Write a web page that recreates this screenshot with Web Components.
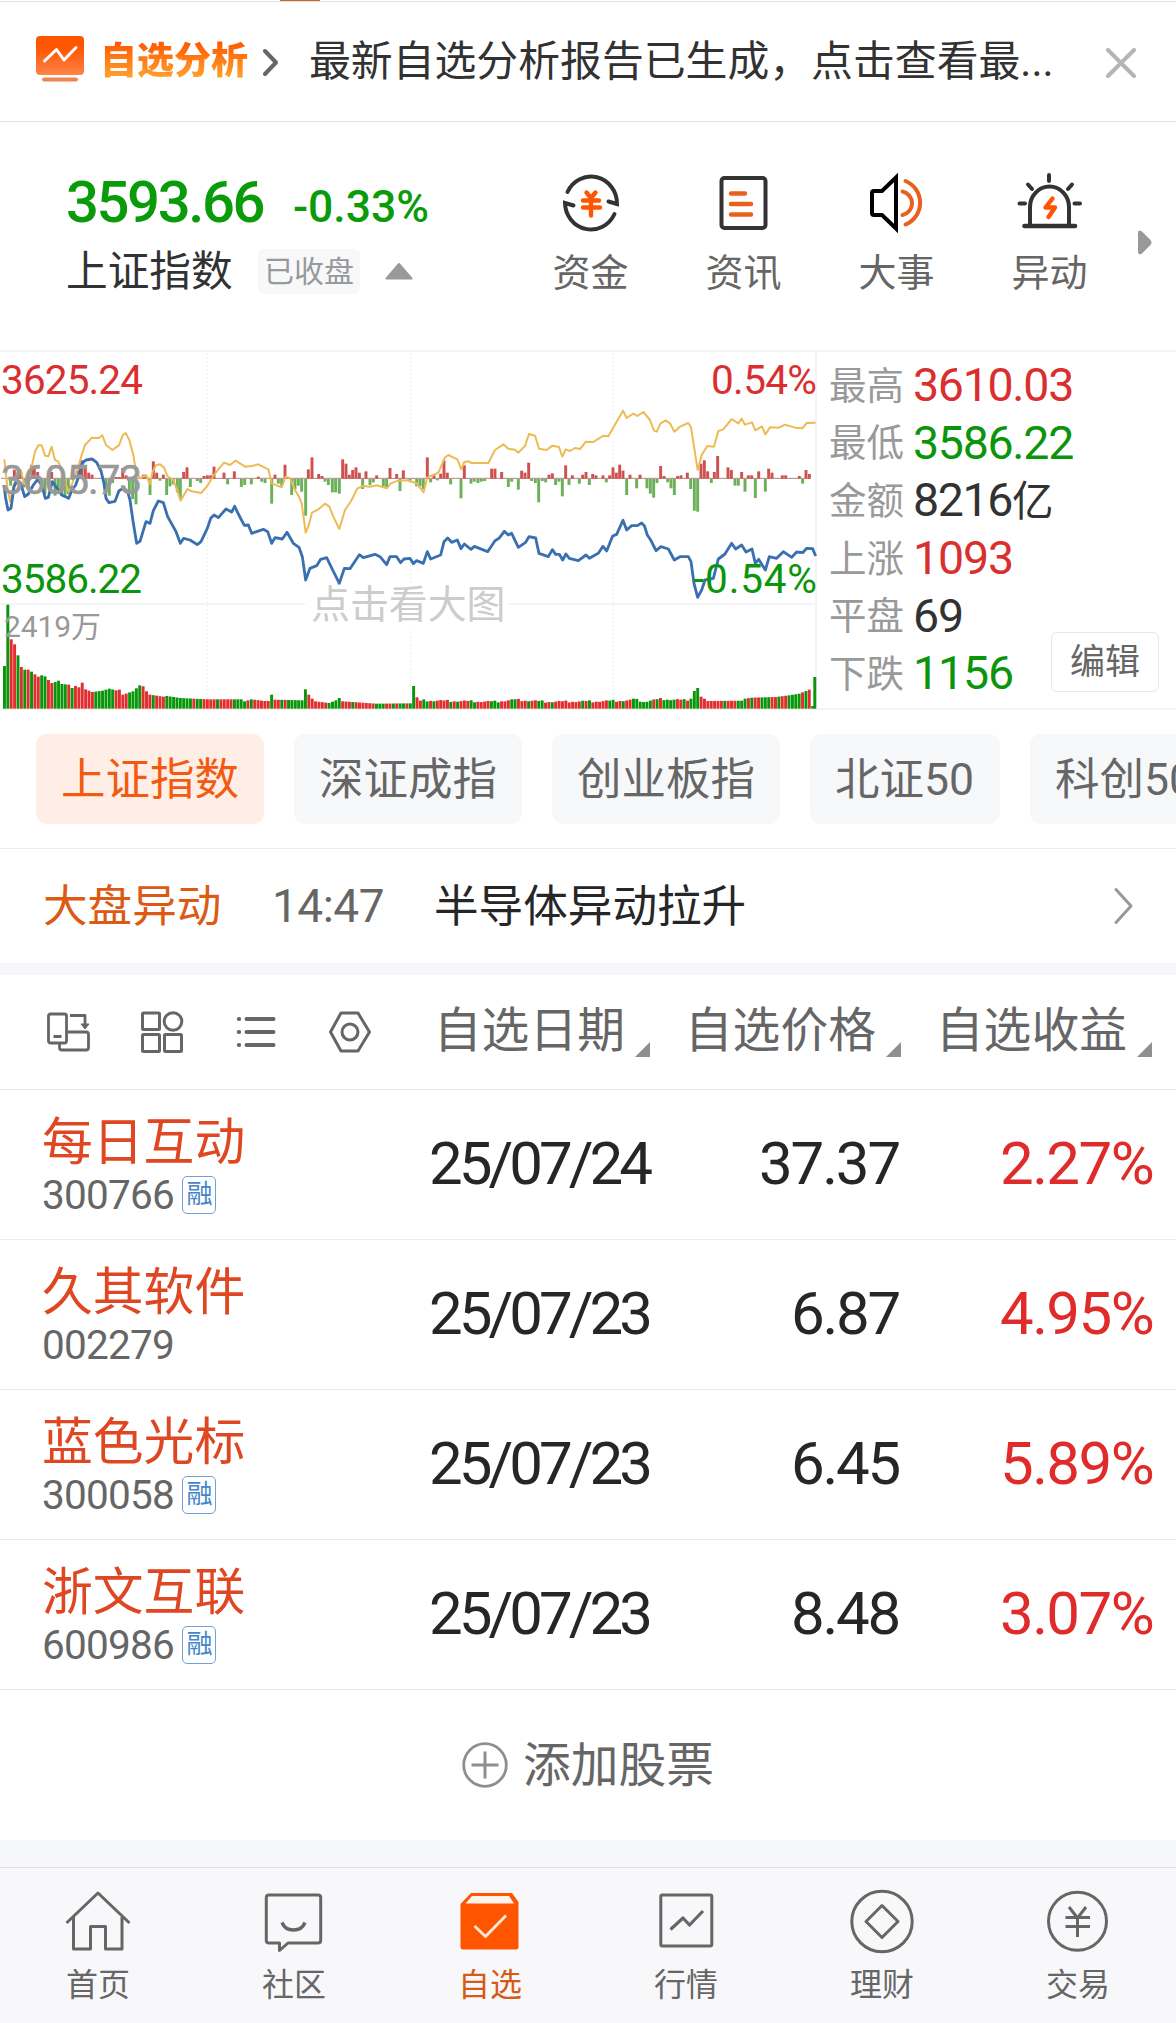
<!DOCTYPE html>
<html lang="zh-CN">
<head>
<meta charset="utf-8">
<title>自选</title>
<style>
  html, body { margin: 0; background: #fff; }
  body { width: 1176px; height: 2023px; overflow: hidden; font-family: Roboto, "Noto Sans CJK SC", sans-serif; color: #323232; }
</style>
</head>
<body>
<stock-app></stock-app>
<script>
const define = (name, html, setup) => customElements.define(name, class extends HTMLElement {
  connectedCallback() {
    if (this.shadowRoot) return;
    const t = document.createElement('template');
    t.innerHTML = typeof html === 'function' ? html(this) : html;
    this.attachShadow({ mode: 'open' }).append(t.content.cloneNode(true));
    if (setup) setup(this);
  }
});

/* Text run tracked so that its advance equals the "w" attribute. */
define('fit-text', `<style>:host{display:block;white-space:nowrap}</style><slot></slot>`, el => {
  const r = document.createRange();
  r.selectNodeContents(el);
  const natural = r.getBoundingClientRect().width, n = [...el.textContent].length;
  el.style.letterSpacing = ((+el.getAttribute('w') - natural) / n).toFixed(3) + 'px';
});

define('report-banner', `
<style>
  :host{display:flex;flex-direction:column;height:122px;box-sizing:border-box;border-bottom:1px solid #e2e2e2}
  .strip{height:1px;padding-left:280px;border-bottom:1px solid #e2e2e2}
  .strip i{display:block;width:40px;height:1px;background:#d0622f}
  .row{display:flex;align-items:center;height:119px;padding-left:36px}
  .tag{width:148px;margin-left:16px;font:900 37px/50px "Noto Sans CJK SC",sans-serif;white-space:nowrap;background:linear-gradient(#ff5a00 20%,#ff9d2b 85%);-webkit-background-clip:text;background-clip:text;color:transparent;margin-top:-7px}
  .arrow{margin-left:15px}
  .msg{margin-left:30px;font-size:41.850px;line-height:60px;color:#323232;white-space:nowrap;width:763px}
  .close{margin-left:34px}
  svg{display:block;flex:none}
</style>
<div class="strip"><i></i></div>
<div class="row">
  <svg width="48" height="48" viewBox="0 0 48 48" style="margin-top:-5px"><defs><linearGradient id="g" x1="0" y1="0" x2="0" y2="1"><stop offset=".3" stop-color="#ff5500"/><stop offset="1" stop-color="#ff8348"/></linearGradient></defs>
    <rect y="1" width="48" height="39" rx="4" fill="url(#g)"/><path d="M8.500 26 L20.500 14.500 L28 25 L40 12.500" fill="none" stroke="#fff" stroke-width="3" stroke-linecap="round" stroke-linejoin="round"/><rect x="6" y="42.500" width="36" height="4" rx="2" fill="#f08450"/></svg>
  <span class="tag">自选分析</span>
  <svg class="arrow" width="16" height="28" viewBox="0 0 16 28" style="margin-top:1px"><path d="M2 3 L13 14.500 L2 26" fill="none" stroke="#666" stroke-width="4" stroke-linecap="round" stroke-linejoin="round"/></svg>
  <span class="msg">最新自选分析报告已生成，点击查看最...</span>
  <svg class="close" width="30" height="30" viewBox="0 0 30 30" style="margin-top:2px"><path d="M2 2 L28 28 M28 2 L2 28" stroke="#b5b5b5" stroke-width="4" stroke-linecap="round"/></svg>
</div>`);

const quickIcons = {
  fund: `<g fill="none" stroke="#333" stroke-width="4" stroke-linecap="round" stroke-linejoin="miter"><path d="M14.500 22 A26 27 0 0 1 64 34 L55.500 31.500"/><path d="M61.500 44 A26 27 0 0 1 12 33 L20.500 35.500"/></g><g fill="none" stroke="#ff5500" stroke-width="4.400" stroke-linecap="round"><path d="M33.500 22.500 L38 28 L42.500 22.500 M30 30.500 H46 M30 37.500 H47 M38 30 V45.500"/></g>`,
  news: `<rect x="15.500" y="8" width="44" height="50" rx="3" fill="none" stroke="#333" stroke-width="4"/><path d="M25 23.500 H39 M25 34 H45 M25 44.500 H45" stroke="#e8611c" stroke-width="4.500" stroke-linecap="round"/>`,
  event: `<path d="M15 21 H23 L37 7.500 V58.500 L23 45 H15 Q13 45 13 43 V23 Q13 21 15 21Z" fill="none" stroke="#000" stroke-width="4"/><path d="M43.500 21.500 A12 12 0 0 1 43.500 45 M46.500 11 A23.500 23.500 0 0 1 46.500 54.500" fill="none" stroke="#e8611c" stroke-width="4" stroke-linecap="round"/>`,
  alert: `<g fill="none" stroke="#333" stroke-width="4" stroke-linecap="round"><path d="M18 54 V37 A19.500 20.500 0 0 1 57 37 V54"/><path d="M12.500 56 H63" stroke-width="4.600"/><path d="M37 5 V11 M16 14.500 L20 19 M60 14.500 L56 19 M7.500 33.500 H13 M62.500 33.500 H68"/></g><path d="M40.500 28.500 L33.500 37.500 H43 L36.500 47" fill="none" stroke="#ff5500" stroke-width="4.400" stroke-linejoin="round" stroke-linecap="round"/>`
};
define('quick-link', el => `
<style>
  :host{display:flex;flex-direction:column;align-items:center;width:153px;height:130px}
  svg{display:block} .l{font-size:38px;line-height:48px;margin-top:15px;color:#666;white-space:nowrap}
</style><svg width="76" height="64" viewBox="0 0 76 64">${quickIcons[el.getAttribute('icon')]}</svg><div class="l"><slot></slot></div>`);

define('index-summary', `
<style>
  :host{display:flex;height:229px;align-items:flex-start;box-sizing:border-box;padding-left:66px}
  .left{width:448px;padding-top:46px}
  .nums{display:flex;align-items:flex-end;color:#0a9b0a;font-weight:500}
  .price{font-size:58px;line-height:68px}
  .pct{font-size:44.500px;line-height:60px;margin:0 0 -1px 30px}
  .info{display:flex;align-items:center;margin-top:11px;height:48px}
  .name{font-size:41.700px;line-height:48px;width:192px;white-space:nowrap;padding-top:2px}
  .state{width:102px;height:45px;border-radius:6px;background:#f7f8fa;color:#999;font-size:30px;line-height:46px;text-align:center}
  .up{margin-left:25px}
  .quick{display:flex;padding-top:48px}
  .more{margin:108px 0 0 11px}
  svg{display:block}
</style>
<div class="left">
  <div class="nums"><fit-text class="price" w="197">3593.66</fit-text><fit-text class="pct" w="136">-0.33%</fit-text></div>
  <div class="info"><span class="name">上证指数</span><span class="state">已收盘</span><svg class="up" width="28" height="18" viewBox="0 0 28 18"><path d="M14 2 L26.500 16.500 H1.500Z" fill="#999" stroke="#999" stroke-linejoin="round" stroke-width="2"/></svg></div>
</div>
<div class="quick"><quick-link icon="fund">资金</quick-link><quick-link icon="news">资讯</quick-link><quick-link icon="event">大事</quick-link><quick-link icon="alert">异动</quick-link></div>
<svg class="more" width="15" height="25" viewBox="0 0 15 25"><path d="M2 3 Q2 1 4 2 L13 11 Q14 12.500 13 14 L4 23 Q2 24 2 22Z" fill="#999" stroke="#999" stroke-width="2" stroke-linejoin="round"/></svg>`);

/* Chart series, in thirds of a pixel from the top of the chart. */
const YELLOW = '13,358 22,440 30,485 40,440 50,405 62,390 72,430 85,440 95,380 105,335 115,316 125,316 135,347 145,349 155,320 165,360 175,365 190,400 200,440 208,458 220,420 235,380 245,345 255,315 276,293 297,294 307,286 318,315 337,330 357,316 368,286 377,279 388,300 400,345 408,395 420,415 438,405 450,432 458,395 468,376 480,373 492,382 502,408 520,420 532,452 542,482 562,447 575,454 603,459 622,438 640,408 655,388 672,368 690,375 707,362 735,380 755,378 775,373 805,388 815,430 845,442 857,410 870,415 885,450 897,470 905,490 917,578 925,560 936,518 955,508 975,491 988,500 1000,530 1018,567 1035,510 1055,480 1072,445 1090,438 1110,440 1130,436 1160,445 1172,430 1195,422 1220,421 1250,430 1271,457 1282,412 1300,405 1315,398 1325,375 1335,352 1345,345 1372,358 1384,388 1393,366 1405,364 1415,369 1465,369 1485,330 1510,313 1525,326 1545,329 1555,338 1575,318 1587,282 1605,287 1617,326 1640,330 1657,317 1677,321 1687,350 1697,328 1710,333 1725,324 1740,327 1758,305 1780,306 1810,287 1825,289 1850,245 1869,212 1880,234 1900,221 1912,228 1930,216 1950,240 1962,272 1970,275 1982,250 1997,241 2010,250 2023,275 2040,260 2065,249 2073,262 2093,390 2105,345 2122,318 2142,320 2155,273 2170,268 2195,237 2215,250 2225,236 2235,254 2256,247 2266,271 2286,259 2296,283 2310,262 2337,263 2355,254 2385,263 2407,265 2420,249 2447,248';
const BLUE = '12,435 17,475 24,510 33,505 42,440 52,420 62,430 74,470 85,462 100,435 113,418 125,435 136,475 145,472 157,425 168,440 185,465 206,475 216,450 227,435 236,410 246,370 258,360 276,357 290,367 303,393 312,430 318,475 327,488 345,484 357,452 372,444 383,455 390,480 400,550 410,610 420,604 438,545 450,550 460,512 475,483 490,488 503,530 528,575 541,610 551,595 570,600 592,614 603,605 622,565 632,535 642,525 655,533 678,507 695,516 704,499 715,522 733,556 745,555 755,580 790,568 803,575 815,610 825,593 847,597 861,577 880,610 897,622 907,650 917,720 930,685 950,677 962,658 980,653 998,690 1018,730 1033,685 1050,686 1078,644 1090,653 1125,643 1140,650 1160,674 1170,650 1190,650 1202,668 1212,657 1230,655 1240,671 1250,662 1270,670 1282,635 1292,657 1322,645 1332,605 1343,594 1355,607 1372,600 1383,626 1393,612 1413,628 1423,619 1463,635 1485,602 1497,595 1513,574 1525,585 1535,580 1555,622 1576,608 1587,590 1607,594 1617,640 1645,650 1657,629 1667,643 1678,643 1688,660 1698,642 1708,655 1735,662 1758,645 1768,655 1795,640 1809,619 1820,633 1838,588 1850,583 1869,541 1880,570 1895,557 1912,557 1925,549 1933,557 1942,585 1952,600 1968,632 1983,620 2005,627 2023,660 2040,650 2065,650 2073,665 2082,730 2093,772 2105,750 2115,720 2140,715 2155,657 2175,642 2195,610 2207,627 2225,615 2238,636 2256,627 2266,670 2276,658 2296,690 2308,650 2330,655 2350,635 2375,652 2390,636 2408,638 2420,625 2438,626 2447,648';
const UP = '43,27 52,18 62,22 95,42 103,30 113,20 155,20 236,25 246,55 256,40 266,18 276,12 348,5 358,5 368,32 378,10 430,12 440,8 460,52 470,18 490,12 551,20 561,34 612,8 622,10 632,10 642,36 672,18 703,22 775,6 825,12 855,42 865,5 925,28 936,64 956,14 966,8 1028,58 1038,45 1048,12 1058,26 1068,34 1078,18 1098,22 1130,10 1170,32 1190,14 1210,25 1282,64 1302,14 1322,15 1332,55 1342,18 1393,40 1475,30 1485,30 1505,20 1565,24 1575,18 1586,48 1647,12 1657,16 1697,40 1717,10 1748,12 1758,20 1778,14 1788,10 1809,10 1829,10 1839,34 1849,18 1859,42 1869,24 1890,12 1920,12 1982,38 1992,8 2033,8 2043,10 2062,18 2103,45 2113,55 2123,22 2143,20 2153,68 2184,34 2194,26 2225,20 2245,10 2255,10 2276,22 2306,30 2316,18 2347,10 2357,10 2398,8 2418,26 2428,14';
const DOWN = '32,20 72,25 82,20 125,18 135,45 145,18 165,50 175,45 185,50 195,50 205,45 318,20 328,50 338,12 388,45 398,60 408,76 450,48 480,5 500,48 510,22 520,16 532,40 541,60 571,24 592,6 602,12 683,16 724,24 734,18 754,16 785,8 795,12 815,74 835,14 845,20 875,48 885,30 895,20 905,38 917,110 975,8 985,18 997,40 1007,40 1018,44 1088,30 1110,18 1120,10 1150,22 1160,28 1200,36 1230,5 1250,22 1260,22 1270,30 1292,10 1312,4 1352,16 1383,58 1413,14 1423,8 1434,12 1444,8 1454,6 1525,24 1535,8 1555,32 1595,6 1606,12 1616,70 1627,6 1637,10 1667,18 1677,8 1687,52 1707,18 1738,14 1768,18 1819,10 1880,48 1910,28 1941,28 1951,44 1961,56 1971,12 2003,10 2013,28 2023,48 2072,30 2083,95 2093,98 2134,12 2205,20 2215,20 2235,38 2266,57 2296,38 2408,14';
/* Volume: "minute:height" keys, linear in between. */
const VOLUME = '0:128 1:312 2:208 3:193 4:160 5:125 6:117 7:117 8:111 9:103 10:96 11:100 12:97 13:86 14:77 15:80 16:84 17:74 19:72 20:62 21:68 22:64 23:78 24:58 26:50 29:54 31:60 33:55 34:57 35:42 38:52 39:61 40:70 41:67 42:52 43:42 47:36 48:38 52:32 60:28 70:28 71:22 73:28 77:23 78:23 79:42 80:27 88:25 89:58 90:42 91:30 92:22 96:17 98:25 99:32 100:22 110:15 120:16 121:68 122:34 123:24 133:22 145:20 151:26 160:20 175:21 185:24 186:28 189:20 194:28 202:24 203:30 204:53 205:62 206:36 207:30 208:23 218:24 219:30 221:33 228:35 232:40 235:45 238:57 239:8 240:95';
const HUES = 'ggrrgrgrgrrggrrggggrgrrrrrrggggggrrrrggggrrrgrrrggggggggrggrrrrgrrrrggggrgrrrrrgrrgrggggggrrrrrrggggrrrgrrrrrrgggrrgrggrggrrggrgrrrrgrgrrrggrrrrgggrrrggrrrgrrggrrgrrrrrrrrgrgrrrrrggrrgrrggggggrgrggggrrgrggg';
const hue = i => i >= 239 ? 'g' : i >= 206 ? 'rrrrrrrgrrrgggrgrrgggrrgrrggggrgr'[i - 206] : HUES[i];
const pairs = s => s.split(' ').map(p => p.split(/[,:]/).map(Number));
const volume = () => {
  const k = pairs(VOLUME); let out = '', j = 0;
  for (let i = 0; i <= 240; i++) {
    while (j < k.length - 2 && k[j + 1][0] <= i) j++;
    const [a, ha] = k[j], [b, hb] = k[j + 1];
    let h = ha + (hb - ha) * (i - a) / (b - a);
    if (i > 123 && i < 202) h += [0, 3, -2, 1, 4, -1, 2][i * 5 % 7];
    const x = i === 240 ? 2440 : 9 + i * 10.145;
    out += `<rect x="${x.toFixed(1)}" y="${(1106 - h).toFixed(1)}" width="8.800" height="${h.toFixed(1)}" fill="${hue(i) === 'g' ? '#0a960a' : '#e12f2f'}"/>`;
  }
  return out;
};
define('minute-chart', () => `
<style>:host{display:block;width:817px;height:360px;flex:none} svg{display:block} text{font-family:Roboto,"Noto Sans CJK SC",sans-serif}</style>
<svg width="817" height="360" viewBox="0 350 817 360">
  <g stroke="#f4f4f4" stroke-width="2" fill="none"><path d="M0 351 H817 M0 604 H305 M509 604 H816 M0 709 H817 M816 351 V709"/><path d="M207.500 353 V709 M410.500 353 V588 M410.500 628 V709 M613.500 353 V709" stroke-width="1" stroke-dasharray="2 2" stroke="#efefef"/></g>
  <g transform="translate(0 340) scale(.33333)">
    <path d="M3 415 H2432" stroke="#b08585" stroke-width="3"/>
    ${pairs(UP).map(([x, h]) => `<rect x="${x - 4.4}" y="${416 - h}" width="8.800" height="${h}" fill="#d0504e"/>`).join('')}
    ${pairs(DOWN).map(([x, h]) => `<rect x="${x - 4.4}" y="417" width="8.800" height="${h}" fill="#6cb05a"/>`).join('')}
    ${volume()}
    <polyline points="${YELLOW}" fill="none" stroke="#edbb54" stroke-width="6" stroke-linejoin="round"/>
    <polyline points="${BLUE}" fill="none" stroke="#3a70b0" stroke-width="8.500" stroke-linejoin="round"/>
  </g>
  <text x="1" y="394" font-size="40.500" fill="#d92f2f" textLength="142">3625.24</text>
  <text x="1" y="493.500" font-size="40.500" fill="#999" stroke="#999" stroke-width=".6" textLength="141">3605.73</text>
  <text x="1" y="593" font-size="40.500" fill="#0c950c" textLength="141">3586.22</text>
  <text x="711" y="394" font-size="40.500" fill="#d92f2f" textLength="106">0.54%</text>
  <text x="693" y="593" font-size="40.500" fill="#0c950c" textLength="124">-0.54%</text>
  <text x="4" y="636.500" font-size="30" fill="#999" textLength="97">2419万</text>
  <text x="311" y="617.500" font-size="38.900" fill="#ccc">点击看大图</text>
</svg>`);

define('stat-line', el => `
<style>:host{display:flex;align-items:center;height:57.600px;white-space:nowrap}
 .k{flex:none;font-size:37.500px;line-height:57px;width:84px;color:#999;padding-top:1px} .v{flex:none;font-size:46.500px;line-height:57px;color:${el.getAttribute('c')}} .u{font-size:41.500px;line-height:57px;color:${el.getAttribute('c')};padding-top:1px}</style>
<span class="k"><slot></slot></span><fit-text class="v" w="${el.getAttribute('w')}">${el.getAttribute('v')}</fit-text><span class="u">${el.getAttribute('u') || ''}</span>`);

define('market-panel', `
<style>
  :host{display:flex;height:360px;margin-top:-1px}
  .stats{flex:1;display:flex;justify-content:space-between;align-items:flex-end;padding:0 17px 0 12px;border-top:2px solid #f4f4f4;border-bottom:2px solid #f4f4f4;box-sizing:border-box}
  .list{align-self:flex-start;width:200px;padding-top:5px;flex:none;margin-right:-20px}
  .edit{width:106px;height:58px;margin-bottom:16px;border:1px solid #e8e8e8;border-radius:6px;font-size:35px;line-height:60px;text-align:center;color:#666;white-space:nowrap;flex:none}
</style>
<minute-chart></minute-chart>
<div class="stats"><div class="list">
  <stat-line c="#d92f2f" v="3610.03" w="160">最高</stat-line>
  <stat-line c="#0c950c" v="3586.22" w="160">最低</stat-line>
  <stat-line c="#323232" v="8216" u="亿" w="99">金额</stat-line>
  <stat-line c="#d92f2f" v="1093" w="100">上涨</stat-line>
  <stat-line c="#323232" v="69" w="50">平盘</stat-line>
  <stat-line c="#0c950c" v="1156" w="100">下跌</stat-line>
</div><div class="edit">编辑</div></div>`);

define('index-chip', `
<style>:host{display:block;flex:none;box-sizing:border-box;height:90px;border-radius:11px;padding:2px 25px 0;background:#f7f8fa;color:#666;font-size:44.500px;line-height:89px;white-space:nowrap}
:host([active]){background:#ffeee5;color:#f25a12}</style><slot></slot>`);
define('index-chips', `
<style>:host{display:flex;gap:30px;box-sizing:border-box;height:139px;padding:24px 0 0 36px;border-bottom:1px solid #eaeaea;overflow:hidden}
index-chip{width:228px} .s{width:190px}</style>
<index-chip active>上证指数</index-chip><index-chip>深证成指</index-chip><index-chip>创业板指</index-chip><index-chip class="s">北证50</index-chip><index-chip class="s">科创50</index-chip>`);

define('market-alert', `
<style>:host{display:flex;align-items:center;box-sizing:border-box;height:126px;padding:0 42px 0 43px;border-bottom:12px solid #f6f7fa;font-size:44.600px;line-height:60px;white-space:nowrap}
.a{color:#dc5a13;width:229px;padding-top:2px} .t{color:#666;font-size:46px;width:162px} .m{color:#262626;flex:1;padding-top:2px} svg{display:block;flex:none}</style>
<span class="a">大盘异动</span><fit-text class="t" w="112">14:47</fit-text><span class="m">半导体异动拉升</span>
<svg width="20" height="38" viewBox="0 0 20 38"><path d="M2 2.500 L17 19 L2 35.500" fill="none" stroke="#999" stroke-width="3" stroke-linecap="round" stroke-linejoin="round"/></svg>`);

define('sort-head', `
<style>:host{display:flex;align-items:flex-end;justify-content:flex-end;height:60px;font-size:47.800px;line-height:58px;color:#666;white-space:nowrap} span{margin-bottom:2px} svg{display:block;margin:0 0 5px 10px}</style>
<span><slot></slot></span><svg width="15" height="15" viewBox="0 0 15 15"><path d="M15 0 V15 H0Z" fill="#8e8e93"/></svg>`);
define('list-toolbar', `
<style>:host{display:flex;align-items:center;box-sizing:border-box;height:115px;border-bottom:1px solid #eaeaea;padding:0 24px 0 44px}
.tools{display:flex;gap:46px;width:364px;flex:none} svg{display:block;flex:none} sort-head{flex:none}</style>
<div class="tools">
 <svg width="48" height="44" viewBox="0 0 48 44" fill="none" stroke="#666" stroke-width="2.800" stroke-linejoin="round"><rect x="4.500" y="4" width="18" height="29" rx="2"/><path d="M9.500 26.500 H17.500 M26 5.500 H41 V15"/><path d="M37 14 H45 L41 19Z" fill="#666" stroke-width="1"/><path d="M15.500 33.500 V37.500 Q15.500 40 18 40 H42 Q44.500 40 44.500 37.500 V24.500 Q44.500 22 42 22 H23"/></svg>
 <svg width="48" height="44" viewBox="0 0 48 44" fill="none" stroke="#666" stroke-width="3"><rect x="4.500" y="3" width="17" height="16.500" rx="1"/><circle cx="35" cy="11.500" r="8.800"/><rect x="4.500" y="24.500" width="17" height="17" rx="1"/><rect x="26.500" y="24.500" width="17" height="17" rx="1"/></svg>
 <svg width="48" height="44" viewBox="0 0 48 44" stroke="#666" stroke-width="4" stroke-linecap="round"><path d="M14.500 9 H41.500 M14.500 22 H41.500 M14.500 35 H41.500 M6.800 9 H7.200 M6.800 22 H7.200 M6.800 35 H7.200"/></svg>
 <svg width="48" height="44" viewBox="0 0 48 44" fill="none" stroke="#666" stroke-width="3" stroke-linejoin="round"><path d="M15 3 H32 L43.500 22 L32 41 H15 L4.500 22Z"/><circle cx="24" cy="22" r="8"/></svg>
</div>
<sort-head style="width:242px">自选日期</sort-head><sort-head style="width:251px">自选价格</sort-head><sort-head style="width:251px">自选收益</sort-head>`);

define('stock-row', el => {
  const a = n => el.getAttribute(n), price = a('price');
  return `
<style>:host{display:flex;align-items:center;box-sizing:border-box;height:150px;border-bottom:1px solid #eaeaea;padding:0 23px 0 42px;white-space:nowrap}
.id{width:387px;flex:none} .name{font-size:50.800px;line-height:60px;color:#df4722;margin-top:-1px}
.code{display:flex;align-items:center;height:40px;margin-top:2px;font-size:40.500px;line-height:40px;color:#666}
.badge{box-sizing:border-box;width:34px;height:38px;margin-left:8px;border:1.500px solid #6fa0d6;border-radius:5px;color:#4585c8;font-size:26px;line-height:35px;text-align:center;letter-spacing:-1px}
.n{font-size:60px;line-height:70px;color:#262626;flex:none;margin-top:-1px} .date{width:222px}
.p{display:flex;justify-content:flex-end;width:248px;flex:none} .r{display:flex;justify-content:flex-end;flex:1} .r .n{color:#e02b2b}</style>
<div class="id"><div class="name"><slot></slot></div><div class="code"><fit-text w="132">${a('code')}</fit-text>${el.hasAttribute('margin') ? '<span class="badge">融</span>' : ''}</div></div>
<fit-text class="n date" w="220">${a('date')}</fit-text>
<div class="p"><fit-text class="n" w="${price.length === 5 ? 140 : 108}">${price}</fit-text></div>
<div class="r"><fit-text class="n" w="153">${a('gain')}</fit-text></div>`;
});

define('add-stock', `
<style>:host{display:flex;align-items:center;justify-content:center;box-sizing:border-box;height:177px;border-bottom:27px solid #f6f7fa;gap:15px;color:#666;font-size:47.800px;line-height:60px} svg{display:block} span{padding-top:2px}</style>
<svg width="46" height="46" viewBox="0 0 46 46" fill="none" stroke="#8e8e93" stroke-width="2.800"><circle cx="23" cy="23" r="21.300"/><path d="M23 9.500 V36.500 M9.500 23 H36.500" stroke-width="3"/></svg><span>添加股票</span>`);

const tabIcons = {
  home: `<path d="M66.500 43 L98 13 L129.500 43 M73.500 37 V69 H90.500 V46.500 H105.500 V69 H122 V37"/>`,
  chat: `<path d="M73 15 H122 Q124.700 15 124.700 17.500 V60.500 Q124.700 63 122 63 H92 L83.500 70.500 V63 H73 Q70.300 63 70.300 60.500 V17.500 Q70.300 15 73 15Z"/><path d="M86 42.500 Q89 50 97.500 50 Q106 50 109 42.500" stroke-width="3.400"/>`,
  pick: `<path d="M68.500 24 L79 13 H120 L126.500 22 V24 V67 Q126.500 69.500 124 69.500 H71 Q68.500 69.500 68.500 67Z" fill="#ff5500" stroke="none"/><path d="M73.500 23.500 L80 16 H117 L122 23.500Z" fill="#fff4ec" stroke="none"/><path d="M82.500 46 L93.500 56.500 L114 35.500" stroke="#ffe9d6" stroke-width="3"/>`,
  quote: `<rect x="72.800" y="15" width="51" height="51" rx="1.500"/><path d="M82.500 49.500 L95 38 L101.500 45 L115 31" stroke-width="3.200"/>`,
  wealth: `<circle cx="98" cy="41.500" r="30.200"/><path d="M98 25.500 L114 41.500 L98 57.500 L82 41.500Z"/>`,
  trade: `<circle cx="97.500" cy="41.300" r="29"/><path d="M89 27 L97.500 38 L106 27 M85.500 37.500 H110 M85.500 46.500 H110 M97.500 38 V57"/>`
};
define('tab-item', el => `
<style>:host{display:flex;flex-direction:column;align-items:center;width:196px;color:#666} :host([active]){color:#d65a17}
svg{display:block} .l{font-size:32px;line-height:44px;margin-top:7px}</style>
<svg width="196" height="76" viewBox="0 0 196 76" fill="none" stroke="#666" stroke-width="3" stroke-linejoin="round">${tabIcons[el.getAttribute('icon')]}</svg><div class="l"><slot></slot></div>`);
define('tab-bar', `
<style>:host{display:flex;box-sizing:border-box;height:156px;padding-top:12px;border-top:1px solid #e0e0e2;background:#f8f8fa}</style>
<tab-item icon="home">首页</tab-item><tab-item icon="chat">社区</tab-item><tab-item icon="pick" active>自选</tab-item><tab-item icon="quote">行情</tab-item><tab-item icon="wealth">理财</tab-item><tab-item icon="trade">交易</tab-item>`);

define('stock-app', `
<style>:host{display:flex;flex-direction:column;width:1176px;height:2023px;overflow:hidden;background:#fff} :host>*{flex:none}</style>
<report-banner></report-banner>
<index-summary></index-summary>
<market-panel></market-panel>
<index-chips></index-chips>
<market-alert></market-alert>
<list-toolbar></list-toolbar>
<stock-row code="300766" margin date="25/07/24" price="37.37" gain="2.27%">每日互动</stock-row>
<stock-row code="002279" date="25/07/23" price="6.87" gain="4.95%">久其软件</stock-row>
<stock-row code="300058" margin date="25/07/23" price="6.45" gain="5.89%">蓝色光标</stock-row>
<stock-row code="600986" margin date="25/07/23" price="8.48" gain="3.07%">浙文互联</stock-row>
<add-stock></add-stock>
<tab-bar></tab-bar>`);
</script>
</body>
</html>
